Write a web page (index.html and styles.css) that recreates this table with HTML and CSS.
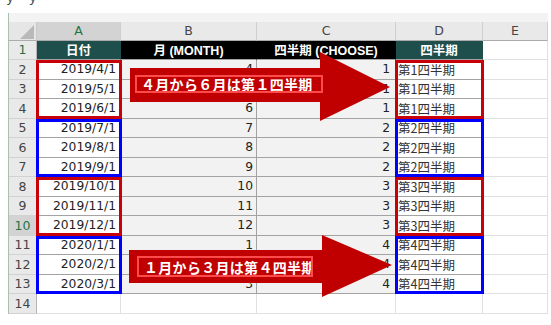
FILE: index.html
```html
<!DOCTYPE html>
<html lang="ja">
<head>
<meta charset="utf-8">
<title>四半期</title>
<link rel="stylesheet" href="styles.css">
</head>
<body>
<div class="page">
  <div class="cut"><span>ｙ ｙ</span></div>
  <div class="sheet-wrap">
    <div class="sheet">
      <div class="strip"></div>
      <div class="corner"><svg width="14" height="14" viewBox="0 0 14 14"><polygon points="14,0 14,14 0,14" fill="#b9b9b9"/></svg></div>
      <div class="colhdr sel">A</div>
      <div class="colhdr">B</div>
      <div class="colhdr">C</div>
      <div class="colhdr">D</div>
      <div class="colhdr">E</div>

      <div class="rowhdr hl">1</div>
      <div class="cell h teal">日付</div>
      <div class="cell h black">月 (MONTH)</div>
      <div class="cell h black">四半期 (CHOOSE)</div>
      <div class="cell h teal">四半期</div>
      <div class="cell e"></div>

      <div class="rowhdr">2</div>
      <div class="cell date">2019/4/1</div>
      <div class="cell num b">4</div>
      <div class="cell num c">1</div>
      <div class="cell q">第1四半期</div>
      <div class="cell e"></div>

      <div class="rowhdr">3</div>
      <div class="cell date">2019/5/1</div>
      <div class="cell num b">5</div>
      <div class="cell num c">1</div>
      <div class="cell q">第1四半期</div>
      <div class="cell e"></div>

      <div class="rowhdr">4</div>
      <div class="cell date">2019/6/1</div>
      <div class="cell num b">6</div>
      <div class="cell num c">1</div>
      <div class="cell q">第1四半期</div>
      <div class="cell e"></div>

      <div class="rowhdr">5</div>
      <div class="cell date">2019/7/1</div>
      <div class="cell num b">7</div>
      <div class="cell num c">2</div>
      <div class="cell q">第2四半期</div>
      <div class="cell e"></div>

      <div class="rowhdr">6</div>
      <div class="cell date">2019/8/1</div>
      <div class="cell num b">8</div>
      <div class="cell num c">2</div>
      <div class="cell q">第2四半期</div>
      <div class="cell e"></div>

      <div class="rowhdr">7</div>
      <div class="cell date">2019/9/1</div>
      <div class="cell num b">9</div>
      <div class="cell num c">2</div>
      <div class="cell q">第2四半期</div>
      <div class="cell e"></div>

      <div class="rowhdr">8</div>
      <div class="cell date">2019/10/1</div>
      <div class="cell num b">10</div>
      <div class="cell num c">3</div>
      <div class="cell q">第3四半期</div>
      <div class="cell e"></div>

      <div class="rowhdr">9</div>
      <div class="cell date">2019/11/1</div>
      <div class="cell num b">11</div>
      <div class="cell num c">3</div>
      <div class="cell q">第3四半期</div>
      <div class="cell e"></div>

      <div class="rowhdr sel">10</div>
      <div class="cell date">2019/12/1</div>
      <div class="cell num b">12</div>
      <div class="cell num c">3</div>
      <div class="cell q">第3四半期</div>
      <div class="cell e"></div>

      <div class="rowhdr">11</div>
      <div class="cell date">2020/1/1</div>
      <div class="cell num b">1</div>
      <div class="cell num c">4</div>
      <div class="cell q">第4四半期</div>
      <div class="cell e"></div>

      <div class="rowhdr">12</div>
      <div class="cell date">2020/2/1</div>
      <div class="cell num b">2</div>
      <div class="cell num c">4</div>
      <div class="cell q">第4四半期</div>
      <div class="cell e"></div>

      <div class="rowhdr">13</div>
      <div class="cell date">2020/3/1</div>
      <div class="cell num b">3</div>
      <div class="cell num c">4</div>
      <div class="cell q">第4四半期</div>
      <div class="cell e"></div>

      <div class="rowhdr">14</div>
      <div class="cell blank"></div>
      <div class="cell blank"></div>
      <div class="cell blank"></div>
      <div class="cell blank"></div>
      <div class="cell blank"></div>
    </div>

    <div class="marks">
      <div class="box red colA r2"></div>
      <div class="box blue colA r5"></div>
      <div class="box red colA r8"></div>
      <div class="box blue colA r11"></div>
      <div class="box red colD r2"></div>
      <div class="box blue colD r5"></div>
      <div class="box red colD r8"></div>
      <div class="box blue colD r11"></div>
    </div>
  </div>

  <div class="arrow arrow1">
    <svg class="shape" width="260" height="69" viewBox="0 0 260 69"><polygon points="0,16 190,16 190,0 260,35 190,69 190,50 0,50" fill="#c00000"/></svg>
    <div class="label label1">４月から６月は第１四半期</div>
  </div>

  <div class="arrow arrow2">
    <svg class="shape" width="263" height="62" viewBox="0 0 263 62"><polygon points="0,15 193,15 193,0 263,30 193,62 193,48 0,48" fill="#c00000"/></svg>
    <div class="label label2">１月から３月は第４四半期</div>
  </div>
</div>
</body>
</html>
```

FILE: styles.css
```css
* { box-sizing: border-box; }

html, body {
  margin: 0;
  padding: 0;
  background: #ffffff;
}

.page {
  position: relative;
  width: 551px;
  height: 325px;
  overflow: hidden;
  font-family: "DejaVu Sans", "Noto Sans CJK JP", sans-serif;
  color: #222;
}

.cut {
  height: 13px;
  overflow: hidden;
  padding-left: 4px;
  font: 12px/12px "Noto Sans CJK JP", sans-serif;
  color: #444;
}
.cut span {
  display: block;
  margin-top: -9px;
  letter-spacing: 4px;
}

.sheet-wrap {
  position: relative;
}

.sheet,
.marks {
  display: grid;
  grid-template-columns: 28px 84px 136px 139px 87px 65px;
  grid-template-rows: 9px 18.5px repeat(14, 19.5px);
}

.sheet {
  width: 540px;
  margin-left: 8px;
  border-left: 1px solid #a9c0b0;
}

.marks {
  position: absolute;
  left: 9px;
  top: 0;
  pointer-events: none;
}

.strip {
  grid-column: 1 / -1;
  background: #f3f3f3;
}

.corner {
  background: #e6e6e6;
  border-right: 1px solid #c9c9c9;
  border-bottom: 1px solid #ababab;
  display: flex;
  align-items: flex-end;
  justify-content: flex-end;
  padding: 0 2px 1px 0;
}
.corner svg { display: block; }

.colhdr {
  background: #e9e9e9;
  border-right: 1px solid #cfcfcf;
  border-bottom: 1px solid #ababab;
  display: flex;
  align-items: center;
  justify-content: center;
  font-size: 12.5px;
  color: #444;
}
.colhdr.sel {
  background: #d3d3d3;
  color: #217346;
}

.rowhdr {
  background: #e9e9e9;
  border-right: 1px solid #b5b5b5;
  border-bottom: 1px solid #d2d2d2;
  display: flex;
  align-items: center;
  justify-content: center;
  font-size: 12.5px;
  color: #444;
}
.rowhdr.hl { color: #217346; }
.rowhdr.sel {
  background: #d3d3d3;
  color: #217346;
}

.cell {
  display: flex;
  align-items: center;
  overflow: hidden;
  white-space: nowrap;
  border-right: 1px solid #a3a3a3;
  border-bottom: 1px solid #a3a3a3;
  font-size: 12.3px;
  color: #222;
}

.h {
  justify-content: center;
  color: #ffffff;
  font: bold 12.5px "Liberation Sans", "Noto Sans CJK JP", sans-serif;
  border-right-color: transparent;
}
.teal { background: #1f4f4c; }
.black { background: #000000; }

.date {
  background: #ffffff;
  justify-content: flex-end;
  padding-right: 4px;
}

.num {
  background: #f2f2f2;
  justify-content: flex-end;
}
.num.b { padding-right: 3px; }
.num.c { padding-right: 5px; }

.q {
  background: #ffffff;
  padding-left: 2px;
  font: 12.5px "Noto Sans CJK JP", sans-serif;
  color: #333;
}

.e {
  background: #ffffff;
  border-right-color: #e0e0e0;
  border-bottom-color: #e0e0e0;
}

.blank {
  background: #ffffff;
  border-right-color: #e0e0e0;
  border-bottom-color: #e0e0e0;
}

.box {
  border: 3px solid;
  margin: 0 -1px 0 -1px;
}
.red { border-color: #c8000a; }
.blue { border-color: #0000ff; }
.colA { grid-column: 2; }
.colD { grid-column: 5; }
.r2 { grid-row: 4 / 7; }
.r5 { grid-row: 7 / 10; }
.r8 { grid-row: 10 / 13; }
.r11 { grid-row: 13 / 16; }

.arrow {
  position: absolute;
}
.arrow .shape {
  display: block;
}
.arrow1 {
  left: 130px;
  top: 52px;
  width: 260px;
  height: 69px;
}
.arrow2 {
  left: 129px;
  top: 235px;
  width: 263px;
  height: 62px;
}

.label {
  position: absolute;
  display: flex;
  align-items: center;
  overflow: hidden;
  white-space: nowrap;
  background: #c00000;
  border: 2px solid #ff4b4b;
  color: #ffffff;
  font: bold 14px "Noto Sans CJK JP", sans-serif;
  letter-spacing: 0.3px;
  padding-left: 4px;
}
.label1 {
  left: 5px;
  top: 23px;
  width: 188px;
  height: 18px;
}
.label2 {
  left: 8px;
  top: 21px;
  width: 176px;
  height: 21px;
  padding-left: 5px;
}
```
